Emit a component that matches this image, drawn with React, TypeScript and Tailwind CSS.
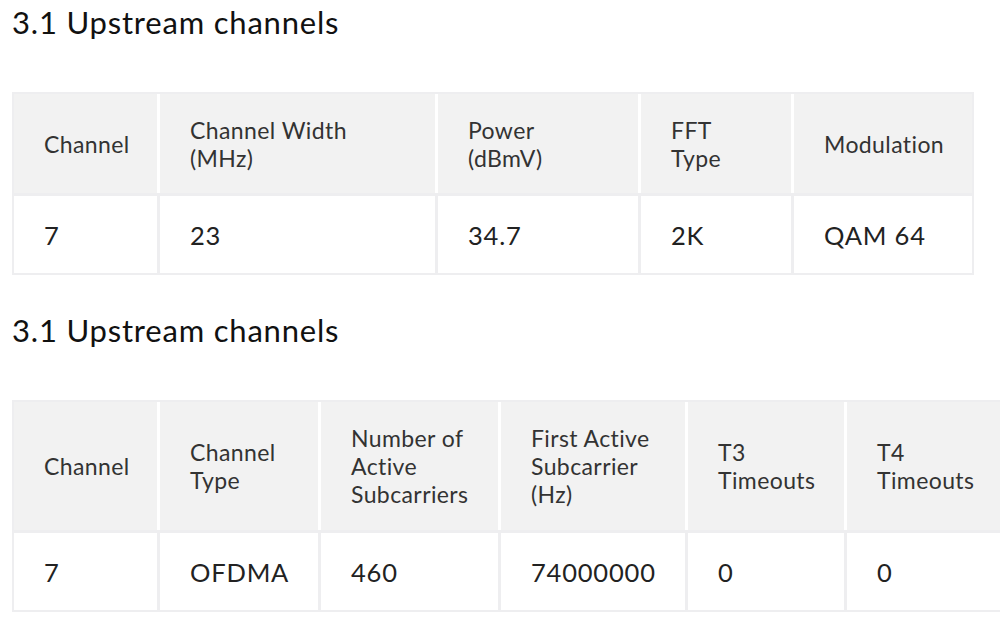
import React from "react";

interface ChannelTable {
  title: string;
  widths: number[];
  headerHeight: number;
  headers: string[][];
  values: string[];
}

const tables: ChannelTable[] = [
  {
    title: "3.1 Upstream channels",
    widths: [143, 275, 200, 150, 178],
    headerHeight: 99,
    headers: [["Channel"], ["Channel Width", "(MHz)"], ["Power", "(dBmV)"], ["FFT", "Type"], ["Modulation"]],
    values: ["7", "23", "34.7", "2K", "QAM 64"],
  },
  {
    title: "3.1 Upstream channels",
    widths: [143, 158, 177, 184, 156, 160],
    headerHeight: 128,
    headers: [
      ["Channel"],
      ["Channel", "Type"],
      ["Number of", "Active", "Subcarriers"],
      ["First Active", "Subcarrier", "(Hz)"],
      ["T3", "Timeouts"],
      ["T4", "Timeouts"],
    ],
    values: ["7", "OFDMA", "460", "74000000", "0", "0"],
  },
];

function Table({ table }: { table: ChannelTable }) {
  const cols = table.widths.map((w) => `${w}px`).join(" ");

  return (
    <div className="inline-block border-2 border-[#eeeef0] bg-[#eeeef0]">
      <div className="grid gap-x-[3px] bg-white" style={{ gridTemplateColumns: cols }}>
        {table.headers.map((lines, i) => (
          <div
            key={i}
            className="flex flex-col justify-center bg-[#f2f2f2] pl-[30px] text-[23px] leading-[28px] tracking-[0.4px] text-[#333]"
            style={{ height: table.headerHeight }}
          >
            {lines.map((line) => (
              <span key={line} className="whitespace-nowrap">{line}</span>
            ))}
          </div>
        ))}
      </div>
      <div className="mt-[3px] grid gap-x-[3px]" style={{ gridTemplateColumns: cols }}>
        {table.values.map((value, i) => (
          <div key={i} className="flex h-[77px] items-center bg-white pl-[30px] pt-[2px] text-[25.5px] tracking-[0.8px] text-[#222]">
            {value}
          </div>
        ))}
      </div>
    </div>
  );
}

export default function App() {
  return (
    <div className="min-h-screen w-[1000px] overflow-hidden bg-white pl-3 pt-1 font-['Lato',sans-serif]">
      {tables.map((table, i) => (
        <div key={i} className={i === 0 ? "" : "mt-[37px]"}>
          <h2 className="whitespace-nowrap text-[31px] leading-[36px] font-normal tracking-[0.8px] text-[#111]">{table.title}</h2>
          <div className="mt-[52px] whitespace-nowrap">
            <Table table={table} />
          </div>
        </div>
      ))}
    </div>
  );
}
